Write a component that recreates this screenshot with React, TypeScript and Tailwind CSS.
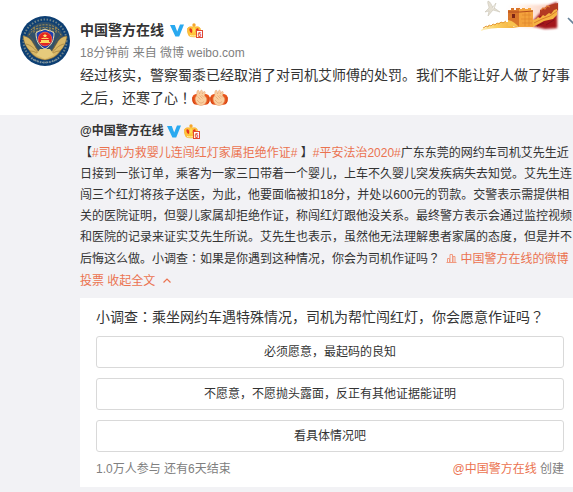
import type { ReactNode } from "react";

const TOPIC = "text-[#eb7350]";

function Avatar() {
  return (
    <svg viewBox="0 0 50 50" className="size-[50px]" role="img" aria-label="中国警方在线">
      <circle cx="25" cy="25" r="25" fill="#0d3f73" />
      <circle cx="25" cy="25" r="21.5" fill="none" stroke="#6f8388" strokeWidth="2" strokeDasharray="1.5 1.6" />
      <circle cx="25" cy="25" r="19" fill="#31506a" />
      <g fill="none" stroke="#a58e50" strokeWidth="1" strokeDasharray="2 1.2">
        <path d="M11 14c6-7 22-7 28 0M9 19c5-10 27-10 32 0M13 12l24 4M37 12l-24 4" />
      </g>
      <g fill="#d9b867" stroke="#84642b" strokeWidth=".5">
        <path d="M3 20c4 0 8 3 10 7l5 8 7 3 7-3 5-8c2-4 6-7 10-7-1 7-3 11-6 14-4 6-9 9-16 10-7-1-12-4-16-10-3-3-5-7-6-14z" />
        <path d="M8 19c5 3 7 8 8 13l5 4M42 19c-5 3-7 8-8 13l-5 4M6 28c5 1 9 5 13 10M44 28c-5 1-9 5-13 10M10 35c5 0 9 3 12 6M40 35c-5 0-9 3-12 6" fill="none" />
      </g>
      <path d="M20 33h10l4 6-9 4-9-4z" fill="#e6cb7c" />
      <path d="M19 15c2 0 4-1 6-2 2 1 4 2 6 2l3 2c0 8-3 13-9 16-6-3-9-8-9-16z" fill="#1f3fb0" stroke="#f1e5ad" strokeWidth="1" />
      <circle cx="25" cy="23" r="6.8" fill="#e32420" stroke="#e8584a" strokeWidth="1" />
      <path d="m25 17.500.7 1.500 1.600.1-1.200 1 .4 1.600-1.500-.9-1.500.9.4-1.600-1.200-1 1.600-.1z" fill="#ffe574" />
      <path d="M21 24h8v2h1v1H20v-1h1zM22 22h6l1 1h-8z" fill="#ffd95d" />
      <path d="M11 42c8 6 20 6 28 0" fill="none" stroke="#7f97a6" strokeWidth="1.4" strokeDasharray="1.4 1" />
    </svg>
  );
}

function Verified() {
  return (
    <svg viewBox="0 0 14 13" className="h-[13px] w-[14px]" role="img" aria-label="认证">
      <path d="M0 1h4.800l2.400 6.500L10 .5h4L9.200 12.500H5.400z" fill="#29a9f0" />
    </svg>
  );
}

function Crown() {
  return (
    <svg viewBox="0 0 16 15" className="h-[15px] w-4" role="img" aria-label="会员6级">
      <circle cx="7" cy="2" r="1.7" fill="#f5a62b" />
      <path d="M2 12.8C0 9 0 5.800.8 5c1.500-1.600 3.500-1.200 4.400-1.100C6 3.200 8 3.200 8.800 3.900c1.200-.2 3-.4 4.200 1.100 1 1.400.4 4.700-1 7.800-2.500 1.400-7.500 1.400-10 0z" fill="#ffc43b" stroke="#f8b030" strokeWidth=".7" />
      <path d="M2.600 5.500c1.500-.6 2.800.7 2.600 3.100L4.800 10C3.300 9.800 1.800 7 2.600 5.500zM11.400 5.500c-1.500-.6-2.800.7-2.600 3.100l.4 1.400c1.500-.2 3-3 2.200-4.500z" fill="#e5351f" />
      <path d="M7 4c1.400 1.800 1.200 4.700 0 6-1.200-1.300-1.400-4.200 0-6z" fill="#ffe15b" />
      <path d="M3 12.400c2 .6 5 .6 7 0" stroke="#fff0a0" fill="none" />
      <rect x="9.500" y="7.500" width="6" height="7" fill="#fff" stroke="#e14932" />
      <text x="10.700" y="13.500" fontSize="6.500" fontWeight="bold" fontFamily="Liberation Sans" fill="#e14932">6</text>
    </svg>
  );
}

function FistEmoji() {
  return (
    <svg viewBox="0 0 18 18" className="inline size-[18px] align-[-4px]" role="img" aria-label="抱拳">
      <path d="M4 5C0 6 0 9 .5 12c.4 3 2 4 5 3.700h7c3 .3 4.500-.7 5-3.700C18 9 18 6 14 5z" fill="#e9541b" />
      <path d="M1 8c-.6 3 .1 6 2 7M17 8c.6 3-.1 6-2 7" fill="none" stroke="#cf4513" />
      <path d="M4.500 7 5 2.500C5.500.8 7 1 7.200 2.500L7.500 5l1-3C9 .6 10.500 1 10.400 2.500L10.300 5l1-2c1-1.200 2.200-.4 1.900.8L12.500 7c2 1 2.700 3 1.800 5.500-1 2.700-3 4-5.300 4s-4.300-1.300-5.300-4C2.800 10 3 8 4.500 7z" fill="#fbcf9f" stroke="#e09a68" strokeWidth=".5" />
      <path d="m5.500 7.500 3 3M7.500 6.500l3 3M9.500 6l2.500 2.500M5 11l2.500 2.500c1.500 1 3 .5 4.500-1" fill="none" stroke="#e2a06e" strokeWidth=".7" />
    </svg>
  );
}

function GreatWall() {
  return (
    <svg viewBox="0 0 80 34" className="h-[34px] w-20" aria-hidden="true">
      <defs>
        <linearGradient id="sky" x1="0" x2="1">
          <stop offset="0" stopColor="#fff" stopOpacity="0" />
          <stop offset=".5" stopColor="#ffe9dc" />
          <stop offset="1" stopColor="#f6c4b8" />
        </linearGradient>
        <linearGradient id="wall" x1="0" x2="1">
          <stop offset="0" stopColor="#fff3c4" />
          <stop offset=".4" stopColor="#fbd060" />
          <stop offset="1" stopColor="#f2a838" />
        </linearGradient>
        <filter id="edge" x="-10%" y="-10%" width="120%" height="120%">
          <feGaussianBlur stdDeviation="1" />
        </filter>
      </defs>
      <path d="M22 6c16-4 36 1 55-3v25H24z" fill="url(#sky)" filter="url(#edge)" />
      <path d="M53 21 62 11l8-6 7-3v26l-12 1-12-3z" fill="#a3161c" filter="url(#edge)" />
      <path d="M60 10 70 5l8-2v7l-7 5-11 1z" fill="#b33a22" />
      <path d="M0 31c3-3 6-4 9-5l12-4h8v-2h4v7l6 1c-15 0-28-1-39 3z" fill="url(#wall)" />
      <path d="m3 28 2-1 1-1 2 1 1-2 2 1 2-2 2 1 2-2 2 1 2-2 2 1 3-2" fill="none" stroke="#e59b38" strokeWidth="1" />
      <path d="M28 10h3V8h3v2h2V8h4v19h-4l-8-4z" fill="#d8742a" />
      <path d="M39 9h3V8h3v1h3V8h3v2h2v17H39z" fill="#f3a23c" />
      <path d="M28 12h12l13-1" fill="none" stroke="#b44a1c" strokeWidth="1" />
      <path d="M29 17h7M42 15h9M41 19h11M42 23h10M45 12v14M49 12v14" fill="none" stroke="#e0852c" strokeWidth=".7" />
      <path d="M32 14h3v4h-3z" fill="#7d2415" />
      <path d="M28 20c5 1 8 4 11 7l-11-1z" fill="#f8c24e" />
      <path d="m53 20 3-1 2-2 2 1 3-3 2 1 4-3 2 1 3-4 3-1v6l-4 4-9 2-11 6z" fill="#f6b443" />
      <path d="m54 23 8-4 8-3 7-5" fill="none" stroke="#cf6d26" strokeWidth=".8" />
      <path d="m57 26 7-3M66 25l8-5" stroke="#85101b" strokeWidth="1" />
      <path d="m61 10 2-2 2 1 2-3 3 1" fill="none" stroke="#e07c38" strokeWidth="1.200" />
      <path d="M8 1c3 1 3 4 5 6l7 5-7-2-5 6 1-5-4 1 4-4c0-2-2-5-1-7z" fill="#e5e0d4" stroke="#c3bdad" strokeWidth=".5" />
      <path d="m12 8 4-5-2 6" fill="#f3f0e9" stroke="#c3bdad" strokeWidth=".5" />
    </svg>
  );
}

function PollIcon() {
  return (
    <svg viewBox="0 0 11 11" className="inline h-[11px] w-[11px] align-[-1px]" aria-hidden="true">
      <path d="M.5 9.500h10M1.500 9V5.500h2V9M4 9V1.500h2.500V9M7 9V3.500h2V9" fill="none" stroke="#f19a80" />
    </svg>
  );
}

function Topic({ children }: { children: ReactNode }) {
  return <a href="#topic" className={TOPIC}>{children}</a>;
}

/* Full-width marks that sit in the middle of their cell */
function Mark({ children }: { children: ReactNode }) {
  return <span className="font-['Noto_Sans_CJK_TC',sans-serif] leading-none" lang="zh-Hant">{children}</span>;
}

const options = ["必须愿意，最起码的良知", "不愿意，不愿抛头露面，反正有其他证据能证明", "看具体情况吧"];

export default function App() {
  return (
    <article className="relative min-h-[492px] overflow-hidden bg-white font-['Liberation_Sans','Noto_Sans_CJK_SC',sans-serif] text-xs text-[#333]">
      <div className="absolute top-0 right-[13px]">
        <GreatWall />
      </div>
      <button type="button" aria-label="更多" className="absolute top-[17px] -right-2">
        <svg viewBox="0 0 14 8" className="h-2 w-[14px]" fill="none" aria-hidden="true">
          <path d="m1 1 6 6 6-6" stroke="#668299" strokeWidth="1.600" />
        </svg>
      </button>

      <header className="flex h-[115px] pt-4 pl-5">
        <Avatar />
        <div className="ml-[10px] whitespace-nowrap">
          <div className="flex h-7 items-center">
            <a href="#user" className="text-sm font-bold">中国警方在线</a>
            <span className="ml-[6px] flex items-center gap-[3px]">
              <Verified />
              <Crown />
            </span>
          </div>
          <p className="leading-[18px] text-[#808080]">18分钟前 来自 微博 weibo.com</p>
          <p className="mt-[2px] text-sm leading-[23px]">
            经过核实，警察蜀黍已经取消了对司机艾师傅的处罚。我们不能让好人做了好事<br />
            之后，还寒了心<Mark>！</Mark><FistEmoji /><FistEmoji />
          </p>
        </div>
      </header>

      <section className="min-h-[377px] bg-[#f2f2f5] pt-[6px] pb-[5px] pl-20">
        <div className="flex h-5 items-center">
          <a href="#user" className="font-bold">@中国警方在线</a>
          <span className="ml-[3px] flex items-center gap-[3px]">
            <Verified />
            <Crown />
          </span>
        </div>
        <p className="mt-[2px] leading-[21px] whitespace-nowrap">
          【<Topic>#司机为救婴儿连闯红灯家属拒绝作证#</Topic> 】<Topic>#平安法治2020#</Topic>广东东莞的网约车司机艾先生近<br />
          日接到一张订单，乘客为一家三口带着一个婴儿，上车不久婴儿突发疾病失去知觉。艾先生连<br />
          闯三个红灯将孩子送医，为此，他要面临被扣18分，并处以600元的罚款。交警表示需提供相<br />
          关的医院证明，但婴儿家属却拒绝作证，称闯红灯跟他没关系。最终警方表示会通过监控视频<br />
          和医院的记录来证实艾先生所说。艾先生也表示，虽然他无法理解患者家属的态度，但是并不
        </p>
        <p className="leading-[22px] whitespace-nowrap">
          后悔这么做。小调查<Mark>：</Mark>如果是你遇到这种情况，你会为司机作证吗<Mark>？</Mark>
          <a href="#poll" className={`${TOPIC} ml-[6px]`}>
            <PollIcon /> 中国警方在线的微博<br />投票
          </a>{" "}
          <button type="button" className={TOPIC}>
            收起全文
            <svg viewBox="0 0 8 5" className="ml-2 inline h-[5px] w-2 align-[2px]" fill="none" aria-hidden="true">
              <path d="m.5 4.500 3.500-3.500 3.500 3.500" stroke="#eb7350" strokeWidth="1.200" />
            </svg>
          </button>
        </p>

        <div className="mt-[6px] bg-white pt-2 pr-[9px] pb-2 pl-4">
          <h2 className="text-sm leading-[22px] whitespace-nowrap">小调查<Mark>：</Mark>乘坐网约车遇特殊情况，司机为帮忙闯红灯，你会愿意作证吗<Mark>？</Mark></h2>
          <div className="mt-2 flex flex-col gap-[10px]">
            {options.map((option) => (
              <button key={option} type="button" className="h-8 rounded-[3px] border border-[#d9d9d9] bg-white">
                {option}
              </button>
            ))}
          </div>
          <footer className="mt-2 flex justify-between leading-[19px] text-[#808080]">
            <span>1.0万人参与 还有6天结束</span>
            <span><a href="#user" className={TOPIC}>@中国警方在线</a> 创建</span>
          </footer>
        </div>
      </section>
    </article>
  );
}
